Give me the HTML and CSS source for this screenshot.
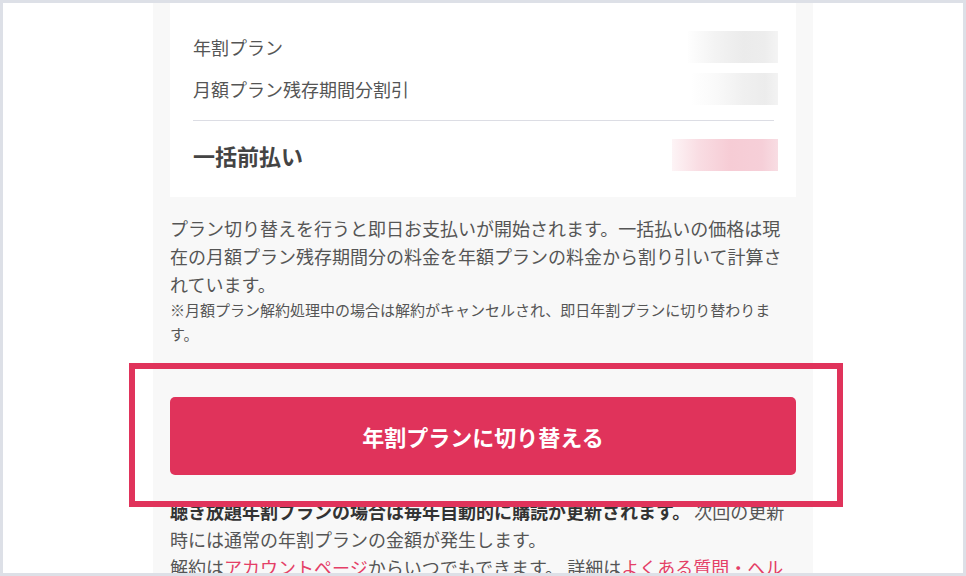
FILE: index.html
```html
<!DOCTYPE html>
<html lang="ja">
<head>
    <meta charset="UTF-8">
    <meta name="viewport" content="width=device-width, initial-scale=1.0">
    <title>年割プランへの切り替え</title>
    <link rel="stylesheet" href="styles.css">
</head>
<body>
    <div class="frame">
        <div class="viewport">
            <div class="panel">
                <!-- 料金明細 -->
                <div class="price-card">
                    <div class="price-row">
                        <span class="price-label">年割プラン</span>
                        <span class="masked masked-gray"></span>
                    </div>
                    <div class="price-row">
                        <span class="price-label">月額プラン残存期間分割引</span>
                        <span class="masked masked-gray masked-soft"></span>
                    </div>
                    <div class="divider"></div>
                    <div class="price-row total-row">
                        <span class="total-label">一括前払い</span>
                        <span class="masked masked-pink"></span>
                    </div>
                </div>

                <p class="description">プラン切り替えを行うと即日お支払いが開始されます。一括払いの価格は現在の月額プラン残存期間分の料金を年額プランの料金から割り引いて計算されています。</p>
                <p class="small-note">※月額プラン解約処理中の場合は解約がキャンセルされ、即日年割プランに切り替わります。</p>

                <div class="action">
                    <button class="switch-btn" type="button">年割プランに切り替える</button>
                </div>

                <p class="renew-text"><strong>聴き放題年割プランの場合は毎年自動的に購読が更新されます。</strong> 次回の更新時には通常の年割プランの金額が発生します。<br>解約は<a href="#">アカウントページ</a>からいつでもできます。 詳細は<a href="#">よくある質問・ヘルプ</a></p>
            </div>
        </div>

        <!-- ボタン周りの強調枠 -->
        <div class="highlight"></div>
    </div>
</body>
</html>
```

FILE: styles.css
```css
/* 全体 */
body {
    margin: 0;
    background-color: #fff;
    font-family: "Noto Sans CJK JP", "Noto Sans", sans-serif;
    color: #555;
}

.frame {
    position: relative;
    width: 966px;
    height: 576px;
    box-sizing: border-box;
    border: 3px solid #dde0e7;
    background-color: #fff;
}

.viewport {
    height: 100%;
    overflow: hidden;
}

/* 中央のカラム */
.panel {
    width: 660px;
    margin: 0 auto;
    padding: 0 17px;
    box-sizing: border-box;
    background-color: #f8f8f8;
}

/* 料金明細カード */
.price-card {
    background-color: #fff;
    padding: 23px 18px 20px 23px;
}

.price-row {
    display: flex;
    align-items: center;
    justify-content: space-between;
    height: 42px;
}

.price-label {
    font-size: 18px;
    line-height: 26px;
    color: #555;
}

.divider {
    height: 1px;
    margin: 10px 4px 0 0;
    background-color: #dcdde4;
}

.total-row {
    height: 44px;
    margin-top: 12px;
}

.total-label {
    font-size: 22px;
    font-weight: 700;
    line-height: 30px;
    color: #444;
}

/* 金額はぼかして表示 */
.masked {
    width: 90px;
    height: 32px;
}

.masked-gray {
    background: linear-gradient(90deg, #fefefe 0%, #f3f3f3 30%, #ebebeb 62%, #ededed 85%, #f4f4f4 100%);
}

.masked-soft {
    width: 87px;
    background: linear-gradient(90deg, #ffffff 0%, #f9f9f9 30%, #f0f0f0 60%, #ececec 85%, #f3f3f3 100%);
}

.masked-pink {
    width: 106px;
    background: linear-gradient(90deg, #fdf4f6 0%, #f9dde3 25%, #f6ccd5 55%, #f6cfd8 85%, #f8dde3 100%);
}

/* 説明文 */
.description {
    margin: 17px 0 0;
    font-size: 18px;
    line-height: 28px;
    color: #555;
}

.small-note {
    margin: 0;
    padding-right: 12px;
    font-size: 15px;
    line-height: 24px;
    color: #555;
}

/* 切り替えボタン */
.action {
    padding-top: 51px;
}

.switch-btn {
    display: block;
    width: 100%;
    height: 78px;
    border: none;
    border-radius: 5px;
    background-color: #e0335b;
    color: #fff;
    font-family: inherit;
    font-size: 22px;
    font-weight: 700;
    cursor: pointer;
}

.switch-btn:hover {
    background-color: #c92a50;
}

/* 更新についての注意書き */
.renew-text {
    margin: 22px 0 0;
    font-size: 18px;
    line-height: 28px;
    color: #555;
}

.renew-text strong {
    color: #333;
}

.renew-text a {
    color: #e43f67;
    text-decoration: none;
}

.highlight {
    position: absolute;
    left: 126px;
    top: 360px;
    width: 714px;
    height: 144px;
    box-sizing: border-box;
    border: 6px solid #e0335b;
    pointer-events: none;
}
```
